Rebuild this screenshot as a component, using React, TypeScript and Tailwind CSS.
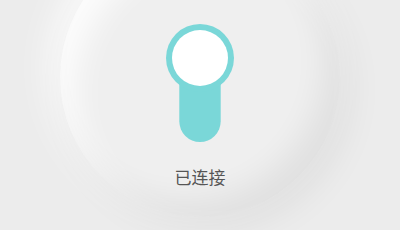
export default function App() {
  return (
    <div className="w-[400px] h-[230px] overflow-hidden bg-[#ececec] flex justify-center">
      <div className="shrink-0 w-[280px] h-[280px] -mt-[63px] rounded-full bg-[#efefef] shadow-[inset_-16px_-16px_30px_rgba(0,0,0,0.06),inset_16px_16px_30px_rgba(255,255,255,0.8),10px_12px_36px_rgba(0,0,0,0.06),-10px_-10px_36px_rgba(255,255,255,0.8)] flex flex-col items-center pt-[87px]">
        <svg width="68" height="118" viewBox="0 0 68 118">
          <rect x="13.3" y="30" width="41.4" height="88" rx="20.7" fill="#7ad7d8" />
          <circle cx="34" cy="34" r="34" fill="#7ad7d8" />
          <circle cx="34" cy="34" r="28" fill="#ffffff" />
        </svg>
        <div className="mt-[26px] text-[17px] leading-none text-[#555555] font-['Noto_Sans_CJK_SC',sans-serif]">
          已连接
        </div>
      </div>
    </div>
  );
}
